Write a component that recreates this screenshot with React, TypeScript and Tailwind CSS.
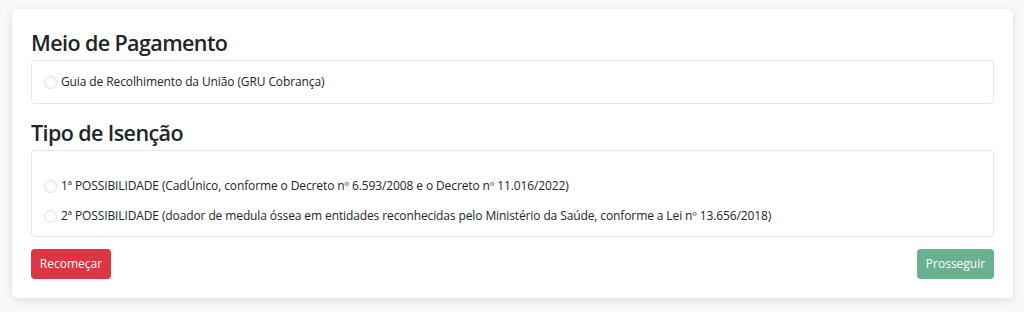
import React from "react";

function Radio() {
  return (
    <span className="inline-block w-[13px] h-[13px] rounded-full border border-[#dcdfe3] bg-white shrink-0" />
  );
}

function Option({ label }: { label: string }) {
  return (
    <label className="flex items-center gap-[4px] h-[30px] text-[12px] tracking-[-0.11px] text-[#212529]">
      <Radio />
      <span>{label}</span>
    </label>
  );
}

export default function App() {
  return (
    <div
      className="w-[1024px] h-[312px] bg-[#f8f9fa] pt-[9px] pl-[12px]"
      style={{ fontFamily: '"Open Sans", "Liberation Sans", sans-serif' }}
    >
      <div className="w-[1001px] h-[289px] bg-white rounded-[5px] shadow-[0_2px_10px_rgba(0,0,0,0.12)] px-[19px] pt-[19px] flex flex-col">
        <h4 className="text-[21.5px] leading-[29px] font-semibold tracking-[-0.6px] text-[#212529] mb-[3px]">Meio de Pagamento</h4>
        <div className="border border-[#e5e7eb] rounded-[4px] h-[44px] pl-[12px] flex items-center">
          <Option label="Guia de Recolhimento da União (GRU Cobrança)" />
        </div>
        <h4 className="text-[21.5px] leading-[29px] font-semibold tracking-[-0.6px] text-[#212529] mt-[14px] mb-[3px]">Tipo de Isenção</h4>
        <div className="border border-[#e5e7eb] rounded-[4px] h-[87px] pl-[12px] pt-[20px] flex flex-col">
          <Option label="1ª POSSIBILIDADE (CadÚnico, conforme o Decreto nº 6.593/2008 e o Decreto nº 11.016/2022)" />
          <Option label="2ª POSSIBILIDADE (doador de medula óssea em entidades reconhecidas pelo Ministério da Saúde, conforme a Lei nº 13.656/2018)" />
        </div>
        <div className="flex justify-between mt-[12px]">
          <button className="h-[30px] w-[80px] rounded-[4px] bg-[#dc3545] text-white text-[12px]">Recomeçar</button>
          <button className="h-[30px] w-[77px] rounded-[4px] bg-[#69b190] text-white text-[12px]">Prosseguir</button>
        </div>
      </div>
    </div>
  );
}
